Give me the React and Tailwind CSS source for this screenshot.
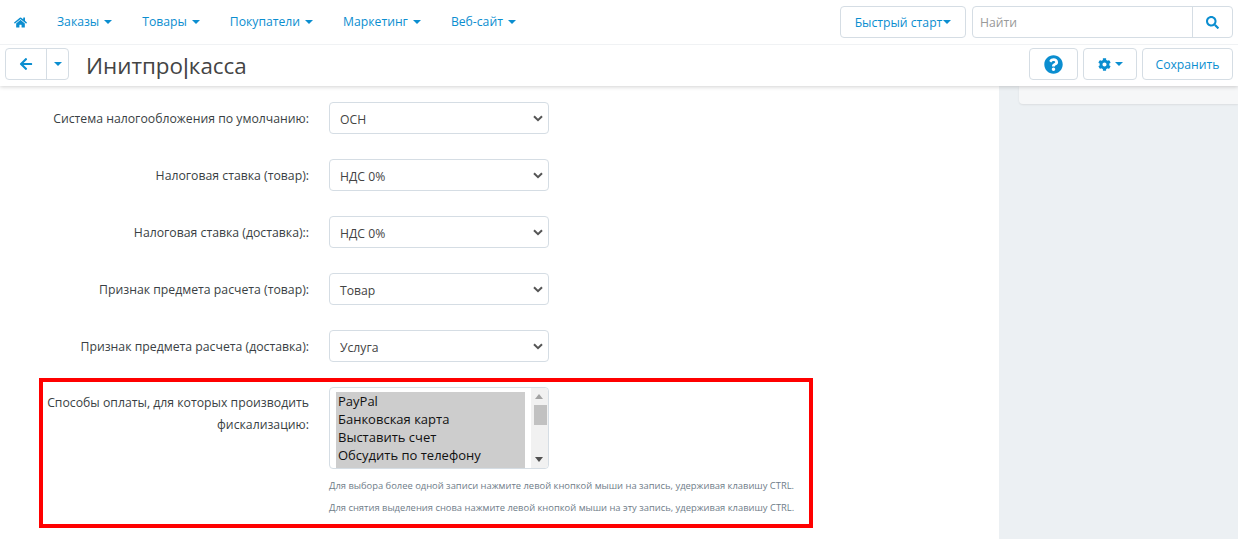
import { FaHome, FaArrowLeft, FaSearch, FaQuestionCircle, FaCog } from "react-icons/fa";

const NAV_ITEMS = ["Заказы", "Товары", "Покупатели", "Маркетинг", "Веб-сайт"];

const FIELDS = [
  { label: "Система налогообложения по умолчанию:", value: "ОСН" },
  { label: "Налоговая ставка (товар):", value: "НДС 0%" },
  { label: "Налоговая ставка (доставка)::", value: "НДС 0%" },
  { label: "Признак предмета расчета (товар):", value: "Товар" },
  { label: "Признак предмета расчета (доставка):", value: "Услуга" },
];

const PAYMENTS = ["PayPal", "Банковская карта", "Выставить счет", "Обсудить по телефону"];

function Caret() {
  return (
    <span className="inline-block h-0 w-0 border-x-[4px] border-t-[4px] border-x-transparent border-t-[#0b8ed0]" />
  );
}

function Field({ label, value }) {
  return (
    <div className="flex items-center">
      <label className="mt-0.5 w-[309px] text-right text-[12.25px] text-[#3a3f44]">{label}</label>
      <div className="ml-5 flex h-8 w-[220px] items-center justify-between rounded border border-[#d5dde4] bg-white pl-2.5 pr-[3px] text-[12.2px] text-[#444]">
        <span className="mt-1">{value}</span>
        <svg width="10" height="7" viewBox="0 0 10 7" className="mr-0.5" aria-hidden="true">
          <path d="M1 1.2 5 5.2l4-4" fill="none" stroke="#555" strokeWidth="2" />
        </svg>
      </div>
    </div>
  );
}

export default function App() {
  return (
    <div
      className="flex h-[539px] w-[1238px] flex-col overflow-hidden bg-white"
      style={{ fontFamily: '"Open Sans", sans-serif' }}
    >
      <header className="relative z-10 bg-white shadow-[0_1px_4px_rgba(0,0,0,0.18)]">
        <div className="flex h-[45px] items-center border-b border-[#f0f2f4] pl-3.5 pr-[5px]">
          <FaHome className="text-[13px] text-[#0b8ed0]" />
          <nav className="ml-[15px] flex items-center">
            {NAV_ITEMS.map((item) => (
              <a key={item} className="flex items-center gap-[5px] px-[15px] text-[12.2px] text-[#0b8ed0]">
                {item}
                <Caret />
              </a>
            ))}
          </nav>
          <button className="ml-auto flex h-8 w-[126px] items-center justify-center gap-px rounded border border-[#d5dde4] text-[12.2px] text-[#0b8ed0]">
            <span className="mt-0.5">Быстрый старт</span>
            <Caret />
          </button>
          <div className="ml-1.5 flex h-8 w-[261px] rounded border border-[#d5dde4]">
            <span className="flex flex-1 items-center pl-[7px] pt-0.5 text-[12.2px] text-[#999]">Найти</span>
            <span className="flex w-10 items-center justify-center border-l border-[#d5dde4]">
              <FaSearch className="text-[13px] text-[#0b8ed0]" />
            </span>
          </div>
        </div>
        <div className="flex h-[41px] items-start pl-[5px] pr-[5px] pt-[3px]">
          <div className="flex h-8 rounded border border-[#d5dde4]">
            <span className="flex w-[41px] items-center justify-center border-r border-[#d5dde4]">
              <FaArrowLeft className="text-[14px] text-[#0b8ed0]" />
            </span>
            <span className="flex w-[21px] items-center justify-center">
              <Caret />
            </span>
          </div>
          <h1 className="ml-[17px] mt-0.5 text-[22.4px] leading-8 text-[#444]">
            Инитпро<span style={{ fontFamily: '"Liberation Sans", sans-serif' }}>|</span>касса
          </h1>
          <button className="ml-auto flex h-8 w-[49px] items-center justify-center rounded border border-[#d5dde4]">
            <FaQuestionCircle className="text-[19px] text-[#0b8ed0]" />
          </button>
          <button className="ml-[5px] flex h-8 w-[54px] items-center justify-center gap-1 rounded border border-[#d5dde4]">
            <FaCog className="text-[13px] text-[#0b8ed0]" />
            <Caret />
          </button>
          <button className="ml-[5px] h-8 w-[91px] rounded border border-[#d5dde4] pt-0.5 text-[12.2px] text-[#0b8ed0]">
            Сохранить
          </button>
        </div>
      </header>

      <div className="flex min-h-0 flex-1">
        <main className="w-[999px] pt-4">
          <div className="flex flex-col gap-[25px]">
            {FIELDS.map((field) => (
              <Field key={field.label} {...field} />
            ))}
          </div>

          <section className="ml-[39px] mt-4 h-[150px] w-[774px] border-4 border-[#f00] pl-px pt-[5px]">
            <div className="flex">
              <label className="w-[265px] pt-[5px] text-right text-[12.25px] leading-[22px] text-[#3a3f44]">
                Способы оплаты, для которых производить фискализацию:
              </label>
              <div className="ml-5 flex h-[82px] w-[220px] rounded border border-[#d5dde4] bg-white pl-[6px] pt-1">
                <ul className="h-[76px] w-[189px] shrink-0 overflow-hidden bg-[#cdcdcd] pl-[2px] text-[13px] leading-[18px] text-[#111]">
                  {PAYMENTS.map((item) => (
                    <li key={item}>{item}</li>
                  ))}
                </ul>
                <div className="relative -mt-1 ml-1.5 h-[80px] w-[17px] shrink-0 rounded-r bg-[#f1f1f1]">
                  <span className="absolute left-[4px] top-[6px] h-0 w-0 border-x-[4px] border-b-[5px] border-x-transparent border-b-[#a3a3a3]" />
                  <span className="absolute left-[3px] top-[17px] h-5 w-[13px] bg-[#c1c1c1]" />
                  <span className="absolute bottom-[6px] left-[4px] h-0 w-0 border-x-[4px] border-t-[5px] border-x-transparent border-t-[#505050]" />
                </div>
              </div>
            </div>
            <div className="ml-[285px] mt-2.5 flex flex-col gap-[9px] text-[9.4px] leading-[13px] text-[#6f7d89]">
              <p className="whitespace-nowrap">Для выбора более одной записи нажмите левой кнопкой мыши на запись, удерживая клавишу CTRL.</p>
              <p className="whitespace-nowrap">Для снятия выделения снова нажмите левой кнопкой мыши на эту запись, удерживая клавишу CTRL.</p>
            </div>
          </section>
        </main>

        <aside className="flex-1 bg-[#ecf0f3] pl-5">
          <div className="h-[18px] rounded-bl bg-[#f6f7f8] shadow-[0_1px_2px_rgba(0,0,0,0.08)]" />
        </aside>
      </div>
    </div>
  );
}
